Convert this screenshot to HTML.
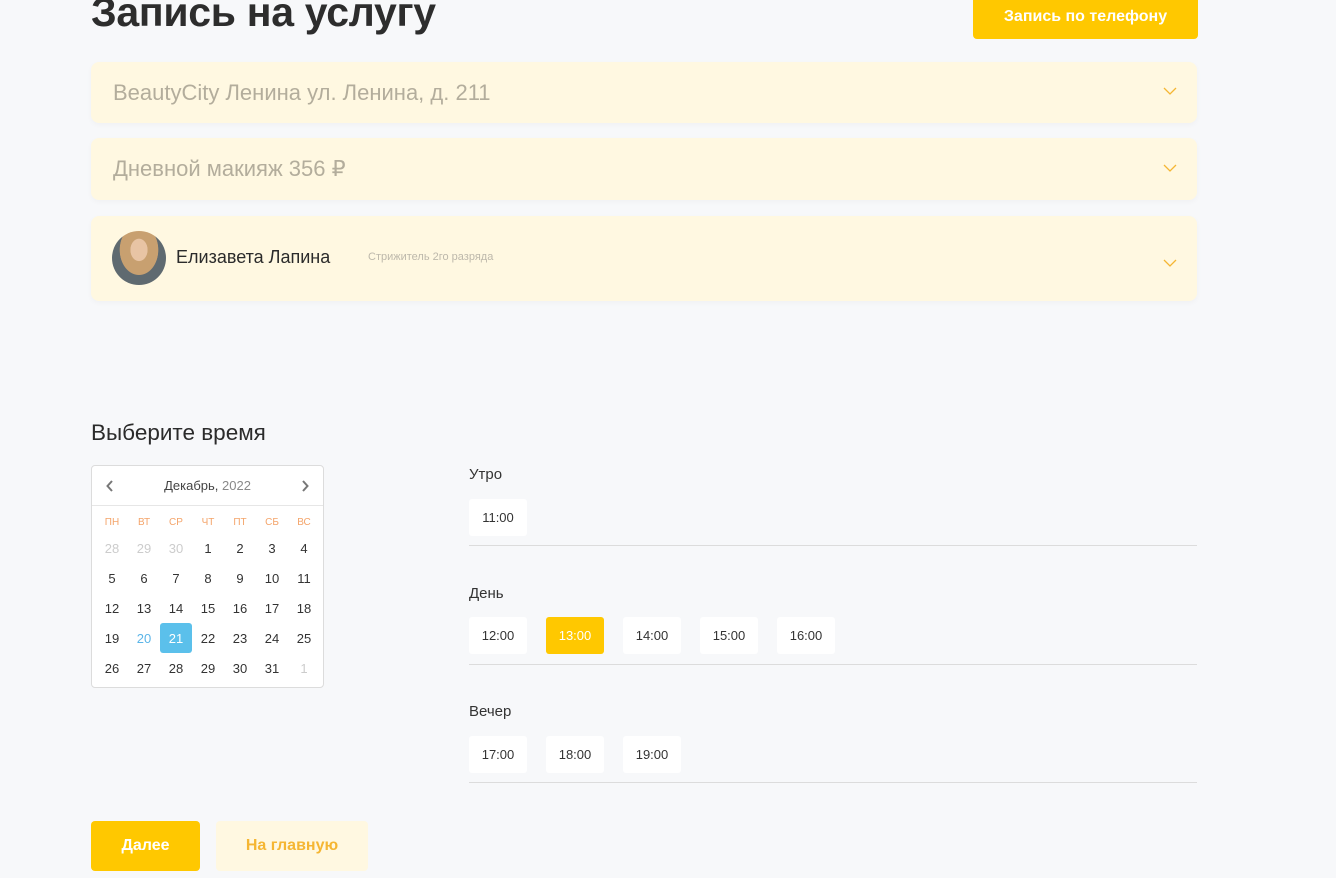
<!DOCTYPE html>
<html><head><meta charset="utf-8"><style>
*{box-sizing:border-box;margin:0;padding:0}
body{width:1336px;height:878px;background:#f7f8fa;font-family:"Liberation Sans",sans-serif;position:relative;overflow:hidden;color:#2b2b2b}
.abs{position:absolute}
h1{position:absolute;left:91px;top:-11px;font-size:41px;font-weight:700;color:#2d2d2d;letter-spacing:-0.3px}
.btn{position:absolute;border-radius:4px;font-weight:700;font-size:16px;display:flex;align-items:center;justify-content:center}
.card{position:absolute;left:91px;width:1106px;background:#fff8e1;border-radius:8px;box-shadow:0 2px 6px rgba(0,0,0,0.03)}
.card .t{position:absolute;left:22px;font-size:22px;color:#b3ad9c}
.chev{position:absolute;right:20px;width:14px;height:8px}
.cal{position:absolute;left:91px;top:465px;width:233px;height:223px;background:#fff;border:1px solid #dcdcdc;border-radius:4px}
.cal .c{position:absolute;width:32px;text-align:center;font-size:13px;color:#333}
.slot{position:absolute;width:58px;height:37px;background:#fff;border-radius:3px;font-size:13px;display:flex;align-items:center;justify-content:center;color:#333}
.line{position:absolute;left:469px;width:728px;height:1px;background:#dcdcdc}
.lbl{position:absolute;left:469px;font-size:15px;color:#333}
</style></head><body>
<h1>Запись на услугу</h1>
<div class="btn" style="left:973px;top:-6px;width:225px;height:45px;background:#ffc800;color:#fff">Запись по телефону</div>

<div class="card" style="top:62px;height:61px"><div class="t" style="top:18px">BeautyCity Ленина ул. Ленина, д. 211</div>
<svg class="chev" style="top:25px" viewBox="0 0 14 8"><path d="M1 1l6 6 6-6" fill="none" stroke="#f5b633" stroke-width="1.3"/></svg></div>
<div class="card" style="top:138px;height:62px"><div class="t" style="top:18px">Дневной макияж 356 ₽</div>
<svg class="chev" style="top:26px" viewBox="0 0 14 8"><path d="M1 1l6 6 6-6" fill="none" stroke="#f5b633" stroke-width="1.3"/></svg></div>
<div class="card" style="top:216px;height:85px">
<div class="abs" style="left:21px;top:15px;width:54px;height:54px;border-radius:50%;background:radial-gradient(ellipse at 50% 35%,#e8c4a4 0 22%,#c8a070 23% 50%,#5f6a70 51%)"></div>
<div class="abs" style="left:85px;top:31px;font-size:18px;color:#2b2b2b">Елизавета Лапина</div>
<div class="abs" style="left:277px;top:35px;font-size:11px;color:#bdb8ab">Стрижитель 2го разряда</div>
<svg class="chev" style="top:43px" viewBox="0 0 14 8"><path d="M1 1l6 6 6-6" fill="none" stroke="#f5b633" stroke-width="1.3"/></svg></div>

<div class="abs" style="left:91px;top:420px;font-size:22.5px;color:#2b2b2b">Выберите время</div>

<div class="cal">
<svg class="abs" style="left:14px;top:14px" width="8" height="12" viewBox="0 0 8 12"><path d="M6 1L1.5 6 6 11" fill="none" stroke="#777" stroke-width="2"/></svg>
<div class="abs" style="left:0;width:231px;top:12px;text-align:center;font-size:13px;color:#444">Декабрь, <span style="color:#888">2022</span></div>
<svg class="abs" style="left:209px;top:14px" width="8" height="12" viewBox="0 0 8 12"><path d="M2 1l4.5 5L2 11" fill="none" stroke="#777" stroke-width="2"/></svg>
<div class="abs" style="left:0;top:39px;width:231px;height:1px;background:#e6e6e6"></div>
<div id="g"></div>
</div>
<script>
var g=document.getElementById('g'),h='';
var names=['ПН','ВТ','СР','ЧТ','ПТ','СБ','ВС'];
names.forEach(function(n,i){h+='<div class="c" style="left:'+(4+i*32)+'px;top:51px;font-size:10px;color:#f4a46a">'+n+'</div>'});
var days=[28,29,30,1,2,3,4,5,6,7,8,9,10,11,12,13,14,15,16,17,18,19,20,21,22,23,24,25,26,27,28,29,30,31,1];
days.forEach(function(d,k){var r=Math.floor(k/7),c=k%7,st='';
if(k<3||k==34)st='color:#ccc';if(k==22)st='color:#5bb5e8';
if(k==23)h+='<div class="abs" style="left:'+(4+c*32)+'px;top:157px;width:32px;height:30px;background:#5bc0eb;border-radius:3px"></div>',st='color:#fff';
h+='<div class="c" style="left:'+(4+c*32)+'px;top:'+(75+r*30)+'px;'+st+'">'+d+'</div>'});
g.innerHTML=h;
</script>

<div class="lbl" style="top:466px">Утро</div>
<div class="slot" style="left:469px;top:499px">11:00</div>
<div class="line" style="top:545px"></div>
<div class="lbl" style="top:585px">День</div>
<div class="slot" style="left:469px;top:617px">12:00</div>
<div class="slot" style="left:546px;top:617px;background:#ffc800;color:#fff">13:00</div>
<div class="slot" style="left:623px;top:617px">14:00</div>
<div class="slot" style="left:700px;top:617px">15:00</div>
<div class="slot" style="left:777px;top:617px">16:00</div>
<div class="line" style="top:664px"></div>
<div class="lbl" style="top:703px">Вечер</div>
<div class="slot" style="left:469px;top:736px">17:00</div>
<div class="slot" style="left:546px;top:736px">18:00</div>
<div class="slot" style="left:623px;top:736px">19:00</div>
<div class="line" style="top:782px"></div>

<div class="btn" style="left:91px;top:821px;width:109px;height:50px;background:#ffc800;color:#fff">Далее</div>
<div class="btn" style="left:216px;top:821px;width:152px;height:50px;background:#fff8e1;color:#f5b633">На главную</div>
</body></html>
